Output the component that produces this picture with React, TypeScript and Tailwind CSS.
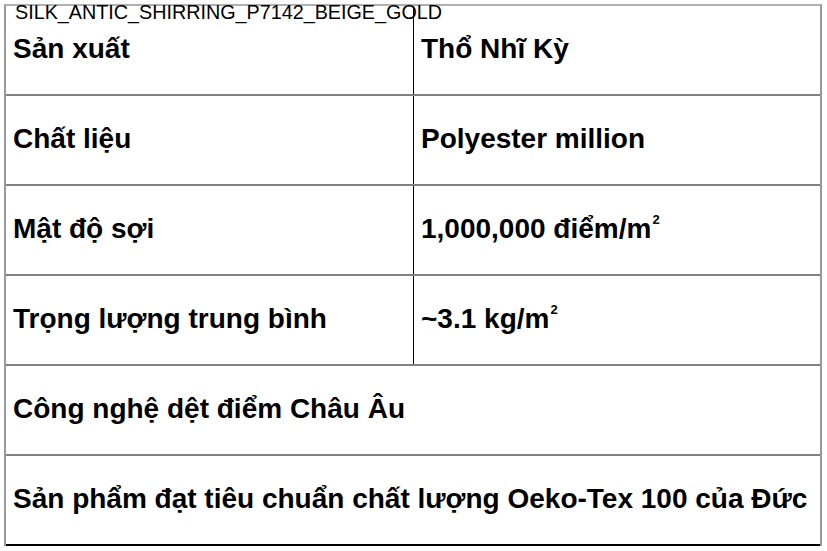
import React from 'react'

interface Row {
  label: string
  value?: React.ReactNode
}

const Sq = () => <sup className="relative top-[-14px] ml-[1px] align-baseline text-[13px] leading-none">2</sup>

const rows: Row[] = [
  { label: 'Sản xuất', value: 'Thổ Nhĩ Kỳ' },
  { label: 'Chất liệu', value: 'Polyester million' },
  { label: 'Mật độ sợi', value: <>1,000,000 điểm/m<Sq /></> },
  { label: 'Trọng lượng trung bình', value: <>~3.1 kg/m<Sq /></> },
  { label: 'Công nghệ dệt điểm Châu Âu' },
  { label: 'Sản phẩm đạt tiêu chuẩn chất lượng Oeko-Tex 100 của Đức' },
]

export default function App() {
  return (
    <div className="relative w-[827px] h-[551px] bg-white text-black font-['Liberation_Sans',Arial,sans-serif]">
      {/* title sits over the table's top edge */}
      <div className="absolute left-[15px] top-[3px] z-10 text-[19.75px] leading-none whitespace-nowrap">
        SILK_ANTIC_SHIRRING_P7142_BEIGE_GOLD
      </div>

      <div className="ml-[4px] pt-[4px]">
        <div className="w-[818px] border-t-2 border-x-2 border-t-[#b0b0b0] border-x-[#9a9a9a]">
          {rows.map((row, i) => (
            <div
              key={i}
              className={
                'flex h-[90px] border-b-2 ' +
                (i === rows.length - 1 ? 'border-black' : 'border-[#808080]')
              }
            >
              {row.value !== undefined ? (
                <>
                  <div className="w-[407px] flex items-center pl-[7px] pb-[2px] text-[28px] font-bold whitespace-nowrap">
                    {row.label}
                  </div>
                  <div className="flex-1 flex items-center border-l border-black pl-[7px] pb-[2px] text-[28px] font-bold whitespace-nowrap">
                    <span>{row.value}</span>
                  </div>
                </>
              ) : (
                <div className="flex-1 flex items-center pl-[7px] pb-[2px] text-[28px] font-bold whitespace-nowrap">
                  {row.label}
                </div>
              )}
            </div>
          ))}
        </div>
      </div>
    </div>
  )
}
